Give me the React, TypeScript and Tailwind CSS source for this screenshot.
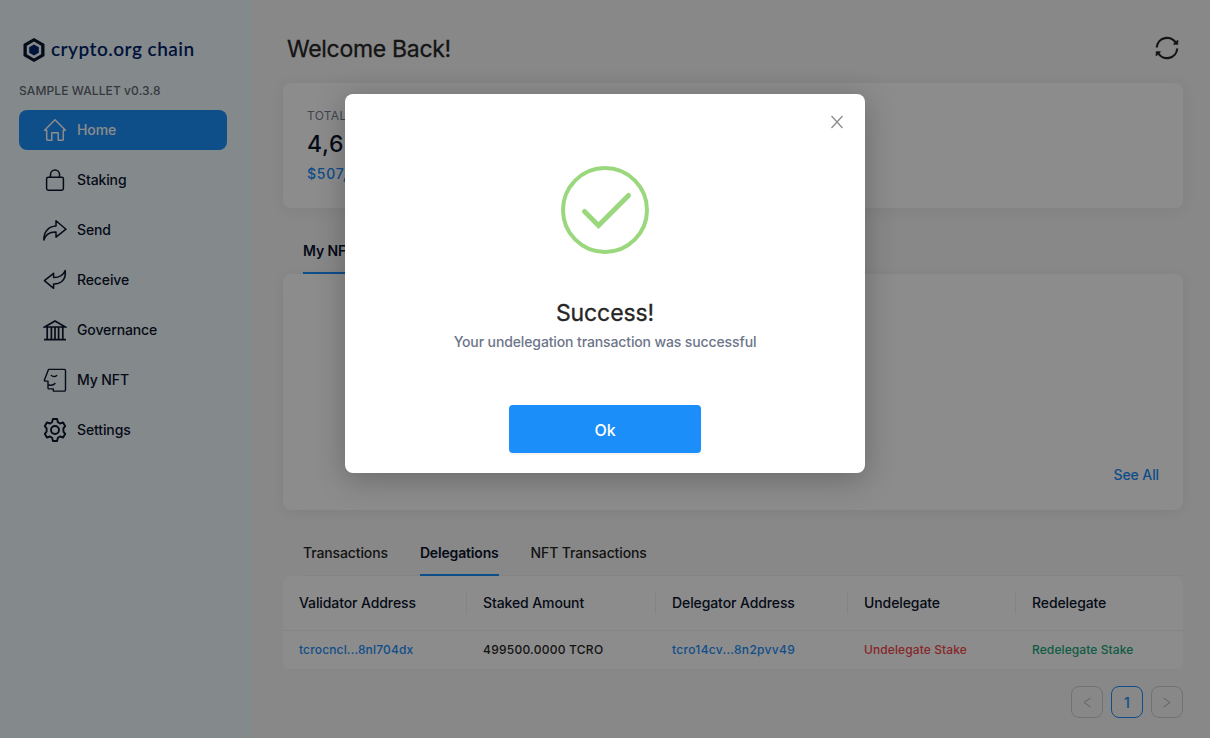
import React from "react";

const ink = "#0b142d";

function Icon({ name }: { name: string }) {
  const common = { width: 24, height: 24, viewBox: "0 0 24 24", fill: "none", stroke: "currentColor", strokeWidth: 1.6, strokeLinejoin: "round" as const, strokeLinecap: "round" as const };
  switch (name) {
    case "home":
      return (<svg {...common} strokeWidth={1.5}><path d="M1.6 12.2 12 1.7l10.4 10.5h-2.1v9.2a.8.8 0 0 1-.8.8h-4.300v-7.500H8.800v7.500H4.500a.8.8 0 0 1-.8-.8v-9.200z" /></svg>);
    case "staking":
      return (<svg {...common} strokeWidth={1.5}><rect x="3.6" y="9.2" width="16.8" height="13" rx="1.6" /><path d="M7.500 9V6.400a4.500 4.500 0 0 1 9 0V9" /></svg>);
    case "send":
      return (<svg {...common} strokeWidth={1.5}><path d="M13 2.800 23 11.200 13 19.100v-5.200C7 13.700 2.600 15.800.900 22 .700 14.100 5.200 8.500 13 8.100z" /></svg>);
    case "receive":
      return (<svg {...common} strokeWidth={1.5}><path d="M22.200 2.500c1 8.700-3.500 13.400-11.600 13.400v4.400L1.400 12.700l9.200-7.400v4.300c5.800.100 9.800-2.400 11.600-7.100z" /></svg>);
    case "governance":
      return (<svg {...common} strokeLinecap="butt" strokeLinejoin="miter"><path d="M1.600 9 12 2.900 22.400 9zM1 21.600h22M4.200 9v12.500M8.400 9v12.500M12 9v12.500M15.600 9v12.500M19.800 9v12.500" strokeWidth="1.700" /></svg>);
    case "nft":
      return (<svg {...common} strokeWidth={1.4}><path d="M5.500 1.400h15.800a1.200 1.200 0 0 1 1.200 1.200v19.300a1.200 1.200 0 0 1-1.200 1.200H10.300v-2.200H6a1 1 0 0 1-1-1v-6.800H2.200a.8.8 0 0 1-.8-1zM8.300 7.400c1.300 1.500 4 1.500 5.400 0M6 17c2.600.500 4.800-.100 6-1.500" /></svg>);
    default:
      return (<svg {...common} strokeWidth={1.9}><circle cx="12" cy="12" r="4" /><path d="M9.900 1h4.200l.8 3.300 2 1.200 3.200-1 2.100 3.700-1.800 2.200v3.200l1.800 2.200-2.100 3.700-3.200-1-2 1.200-.8 3.300H9.900l-.8-3.300-2-1.200-3.200 1-2.100-3.700 1.800-2.200v-3.200L1.800 8.200l2.100-3.700 3.200 1 2-1.200z" /></svg>);
  }
}

const nav = [
  { id: "home", label: "Home" },
  { id: "staking", label: "Staking" },
  { id: "send", label: "Send" },
  { id: "receive", label: "Receive" },
  { id: "governance", label: "Governance" },
  { id: "nft", label: "My NFT" },
  { id: "settings", label: "Settings" },
];

function Sidebar() {
  return (
    <aside className="w-[252px] shrink-0 bg-[#f1fafe] pt-9">
      <div className="ml-[23px] flex h-[27px] items-center gap-[6px] text-[#00246b]">
        <svg width="22" height="26" viewBox="0 0 22 26">
          <path d="M11 1 21.500 7v12L11 25 .5 19V7z" fill={ink} />
          <path d="M11 4.600 18.200 8.800v8.400L11 21.400l-7.200-4.200V8.800z" fill="#f1fafe" />
          <path d="M11 7.400 15.800 10.200v5.600L11 18.600l-4.800-2.800v-5.600z" fill="#00246b" />
        </svg>
        <span className="font-[Lato] text-[19px] font-semibold tracking-[0.48px] whitespace-nowrap">crypto.org chain</span>
      </div>
      <div className="mt-[20px] ml-[19px] h-4 text-[12px] leading-4 tracking-[0.1px] whitespace-nowrap text-[#626973]">SAMPLE WALLET v0.3.8</div>
      <nav className="mt-[11px] ml-[19px] flex w-[208px] flex-col gap-[10px]">
        {nav.map((item, i) => (
          <div key={item.id} className={i === 0 ? "flex h-10 items-center gap-[10px] rounded-lg bg-[#1b8efa] pl-6 text-white" : "flex h-10 items-center gap-[10px] pl-6 text-[#0b142d]"}>
            <Icon name={item.id} />
            <span className="pb-0.5 tracking-[-0.12px]">{item.label}</span>
          </div>
        ))}
      </nav>
    </aside>
  );
}

function Table() {
  const cols = "grid grid-cols-[184px_189px_192px_168px_167px]";
  const heads = ["Validator Address", "Staked Amount", "Delegator Address", "Undelegate", "Redelegate"];
  return (
    <div className="overflow-hidden rounded-lg bg-white">
      <div className={cols + " h-[55px] items-center border-b border-[#f0f0f0] tracking-[-0.1px] text-[#0b142d]"}>
        {heads.map((h, i) => (
          <div key={h} className={i < 4 ? "flex h-[22px] items-center border-r border-[#f0f0f0] pb-0.5 pl-4" : "pb-0.5 pl-4"}>{h}</div>
        ))}
      </div>
      <div className={cols + " h-[39px] items-center border-b border-[#f0f0f0] text-[12px] tracking-[0.1px]"}>
        <span className="pl-4 tracking-[0.15px] text-[#1b8efa]">tcrocncl...8nl704dx</span>
        <span className="pl-4 tracking-[0.25px] text-[#262626]">499500.0000 TCRO</span>
        <span className="pl-4 tracking-[0.3px] text-[#1b8efa]">tcro14cv...8n2pvv49</span>
        <span className="pl-4 text-[#f5474b]">Undelegate Stake</span>
        <span className="pl-4 text-[#20a77b]">Redelegate Stake</span>
      </div>
    </div>
  );
}

function Main() {
  return (
    <main className="flex-1 pt-8 pr-[27px] pl-[31px]">
      <div className="flex h-8 items-center justify-between pr-1 pl-1">
        <h1 className="pt-[3px] text-[23px] font-normal tracking-[-0.3px] text-[#262626] [-webkit-text-stroke:0.3px]">Welcome Back!</h1>
        <svg width="24" height="24" viewBox="0 0 24 24" fill="none" stroke="#262626" strokeWidth="2.200">
          <path d="M1.800 11.500A10.200 10.200 0 0 1 21 7.300M22.200 12.500A10.200 10.200 0 0 1 3 16.700" />
          <path d="M22.800 4v4.300h-4.300zM1.200 20v-4.300h4.300z" fill="#262626" stroke="#262626" strokeWidth="0.800" />
        </svg>
      </div>
      <section className="mt-[19px] h-[125px] rounded-lg bg-white pt-6 pl-6 shadow-[0_2px_16px_rgba(0,0,0,0.06)]">
        <div className="h-[18px] text-[12px] leading-[18px] font-normal tracking-[0.3px] text-[#777e90]">TOTAL BALANCE</div>
        <div className="h-[38px] text-[23px] leading-[39px] tracking-[0.7px] text-[#0b142d]">4,669,121.5214 TCRO</div>
        <div className="h-5 leading-[21px] tracking-[0.75px] text-[#1b8efa]">$507,234.18 USD</div>
      </section>
      <div className="mt-[20px] ml-5 flex h-[46px]">
        <div className="flex h-full w-[50px] items-center border-b-2 border-[#1b8efa] font-semibold tracking-[-0.1px] whitespace-nowrap text-[#0b142d]">My NFT</div>
      </div>
      <section className="flex h-[236px] items-end justify-end rounded-lg bg-white pr-6 pb-[25px] shadow-[0_2px_12px_rgba(0,0,0,0.06)]">
        <span className="tracking-[-0.1px] text-[#1b8efa]">See All</span>
      </section>
      <div className="mt-5 ml-5 flex h-[46px] gap-8 border-b border-[#f0f0f0] tracking-[-0.12px] text-[#262626]">
        <div className="flex h-[44px] items-center">Transactions</div>
        <div className="flex h-[46px] items-center border-b-2 border-[#1b8efa] font-semibold tracking-[-0.17px] text-[#0b142d]">Delegations</div>
        <div className="flex h-[44px] items-center">NFT Transactions</div>
      </div>
      <Table />
      <div className="mt-4 flex justify-end gap-2 text-[#b1b1b1]">
        <div className="flex size-8 items-center justify-center rounded-lg border border-[#d0d0d0]"><svg width="10" height="12" viewBox="0 0 10 12" fill="none" stroke="currentColor"><path d="M8.500 2 2 6.500 8.500 11" /></svg></div>
        <div className="flex size-8 items-center justify-center rounded-lg border border-[#1b8efa] text-[#1b8efa]">1</div>
        <div className="flex size-8 items-center justify-center rounded-lg border border-[#d0d0d0]"><svg width="10" height="12" viewBox="0 0 10 12" fill="none" stroke="currentColor"><path d="M1.500 2 8 6.500 1.500 11" /></svg></div>
      </div>
    </main>
  );
}

function SuccessModal() {
  return (
    <div className="absolute inset-0 flex items-start justify-center bg-black/45 pt-[94px]">
      <div className="relative flex h-[379px] w-[520px] flex-col items-center rounded-lg bg-white pt-[72px] shadow-[0_6px_30px_rgba(0,0,0,0.25)]">
        <svg className="absolute top-[21px] right-[21px]" width="14" height="14" viewBox="0 0 14 14" fill="none" stroke="#8c8c8c" strokeWidth="1.300"><path d="M1.500 1 12.500 13M12.500 1 1.500 13" /></svg>
        <svg width="88" height="88" viewBox="0 0 88 88" fill="none" stroke="#9bd87d" strokeLinecap="round" strokeLinejoin="miter">
          <circle cx="44" cy="44" r="42" strokeWidth="4" />
          <path d="M23.500 45.500 37.500 59.500 67.500 29.500" strokeWidth="5" />
        </svg>
        <h2 className="mt-[41px] h-[36px] text-[23px] leading-9 font-normal tracking-[-0.1px] text-[#262626] [-webkit-text-stroke:0.3px]">Success!</h2>
        <p className="leading-[22px] tracking-[-0.12px] text-[#6c7589]">Your undelegation transaction was successful</p>
        <button className="mt-[52px] h-12 w-48 rounded bg-[#1b8efa] pt-0.5 text-[16px] text-white shadow-[0_2px_0_rgba(0,0,0,0.045)]">Ok</button>
      </div>
    </div>
  );
}

export default function App() {
  return (
    <div className="relative flex h-[738px] w-[1210px] overflow-hidden bg-[#f7f7f7] font-['Inter',sans-serif] text-[14px] font-medium">
      <Sidebar />
      <Main />
      <SuccessModal />
    </div>
  );
}
